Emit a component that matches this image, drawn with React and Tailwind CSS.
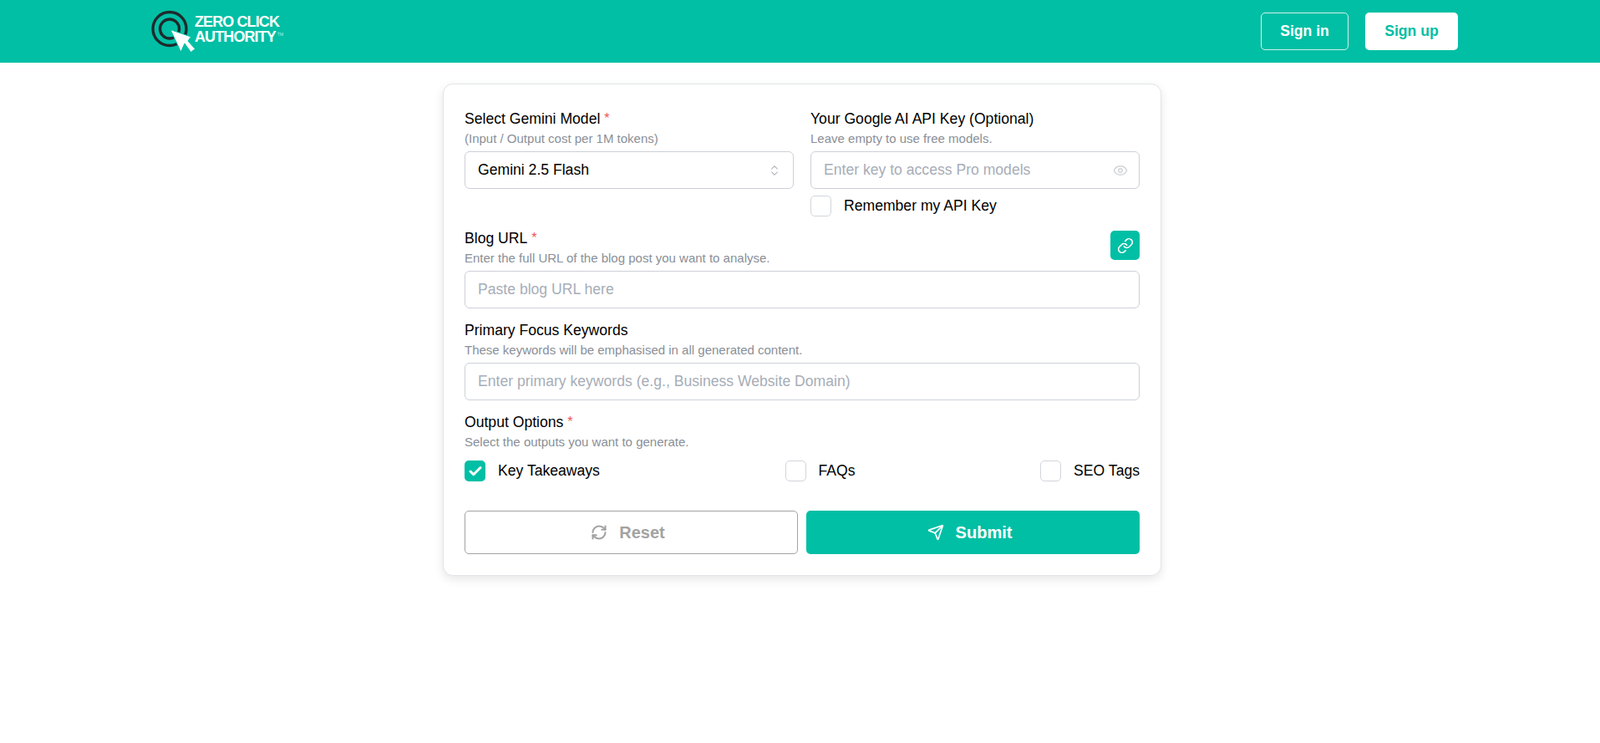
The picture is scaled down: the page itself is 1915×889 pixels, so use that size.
import React from 'react';
import { Check, ChevronsUpDown, Eye, Link, RefreshCw, Send } from 'lucide-react';

const Star = () => <span className="text-[#f05252] ml-[5px] align-[1px] text-[16px]">*</span>;

const Label = ({ children, required }) => (
  <div className="text-[17.6px] leading-[20px] text-black">
    {children}
    {required && <Star />}
  </div>
);

const Hint = ({ children }) => (
  <div className="text-[15px] leading-[16px] mt-[6px] text-[#8a8f98]">{children}</div>
);

const Box = ({ checked }) =>
  checked ? (
    <span className="w-[25px] h-[25px] rounded-[5px] bg-[#00bfa5] flex items-center justify-center shrink-0">
      <Check size={18} strokeWidth={4} className="text-white" />
    </span>
  ) : (
    <span className="w-[25px] h-[25px] rounded-[5px] border border-[#d1d5db] bg-white shrink-0" />
  );

const CheckRow = ({ checked, children }) => (
  <label className="flex items-center gap-[15px] text-[17.6px] leading-[25px] text-black">
    <Box checked={checked} />
    {children}
  </label>
);

const TextField = ({ placeholder }) => (
  <input
    placeholder={placeholder}
    className="w-full h-[45px] rounded-[6px] border border-[#ccd0d8] bg-white px-[15px] text-[17.6px] outline-none placeholder:text-[#a7adb7]"
  />
);

const Logo = () => (
  <div className="flex items-start">
    <svg width="56" height="64" viewBox="0 0 56 64" className="shrink-0">
      <circle cx="22" cy="28.5" r="20" fill="none" stroke="#1f2a2c" strokeWidth="3.4" />
      <circle cx="22" cy="28.5" r="11.5" fill="none" stroke="#1f2a2c" strokeWidth="3.4" />
      <path d="M23 29.5 L35.5 56 L40 46 L47.5 56.5 L52.5 52.5 L44 43 L47.5 38 Z" fill="#fff" stroke="#00bfa5" strokeWidth="1" />
    </svg>
    <div className="ml-[-4px] mt-[11px] text-white font-bold text-[18px] leading-[18px] tracking-[-0.9px]">
      <div>ZERO CLICK</div>
      <div className="flex">
        AUTHORITY
        <span className="text-[5px] leading-[10px] tracking-normal font-normal ml-[2px] mt-[1px] text-[#bfeee6]">TM</span>
      </div>
    </div>
  </div>
);

export default function App() {
  return (
    <div className="min-h-[889px] bg-white font-['Liberation_Sans',Arial,sans-serif]">
      <header className="h-[75px] bg-[#00bfa5] flex items-center justify-between pl-[181px] pr-[170px]">
        <Logo />
        <div className="flex items-center gap-[20px]">
          <button className="w-[105px] h-[45px] rounded-[5px] border border-white/80 text-white font-bold text-[17.6px]">
            Sign in
          </button>
          <button className="w-[111px] h-[45px] rounded-[5px] bg-white text-[#00bfa5] font-bold text-[17.6px]">
            Sign up
          </button>
        </div>
      </header>

      <main className="pt-[25px] pl-[530px]">
        <div className="w-[860px] h-[589px] rounded-[12px] border border-[#e2e4e8] bg-white px-[25px] pt-[31px] shadow-[0_4px_12px_rgba(0,0,0,0.1)]">
          <div className="grid grid-cols-2 gap-x-[20px]">
            <div>
              <Label required>Select Gemini Model</Label>
              <Hint>(Input / Output cost per 1M tokens)</Hint>
              <div className="mt-[7px] h-[45px] rounded-[6px] border border-[#ccd0d8] flex items-center justify-between pl-[15px] pr-[14px] text-[17.6px] text-black">
                Gemini 2.5 Flash
                <ChevronsUpDown size={16} strokeWidth={1.5} className="text-[#8a8f98]" />
              </div>
            </div>
            <div>
              <Label>Your Google AI API Key (Optional)</Label>
              <Hint>Leave empty to use free models.</Hint>
              <div className="mt-[7px] relative">
                <TextField placeholder="Enter key to access Pro models" />
                <Eye size={18} className="absolute right-[14px] top-[14px] text-[#d1d5db]" />
              </div>
              <div className="mt-[8px]">
                <CheckRow>Remember my API Key</CheckRow>
              </div>
            </div>
          </div>

          <div className="mt-[17px] flex items-start justify-between">
            <div className="-mt-[1px]">
              <Label required>Blog URL</Label>
              <Hint>Enter the full URL of the blog post you want to analyse.</Hint>
            </div>
            <button className="w-[35px] h-[35px] rounded-[5px] bg-[#00bfa5] flex items-center justify-center">
              <Link size={20} className="text-white" />
            </button>
          </div>
          <div className="mt-[7px]">
            <TextField placeholder="Paste blog URL here" />
          </div>

          <div className="mt-[16px]">
            <Label>Primary Focus Keywords</Label>
            <Hint>These keywords will be emphasised in all generated content.</Hint>
            <div className="mt-[7px]">
              <TextField placeholder="Enter primary keywords (e.g., Business Website Domain)" />
            </div>
          </div>

          <div className="mt-[16px]">
            <Label required>Output Options</Label>
            <Hint>Select the outputs you want to generate.</Hint>
            <div className="mt-[14px] flex items-center justify-between">
              <CheckRow checked>Key Takeaways</CheckRow>
              <CheckRow>FAQs</CheckRow>
              <CheckRow>SEO Tags</CheckRow>
            </div>
          </div>

          <div className="mt-[35px] grid grid-cols-2 gap-x-[10px]">
            <button className="h-[52px] rounded-[5px] border border-[#a3a3a3] flex items-center justify-center gap-[14px] pr-[8px] text-[20px] font-bold text-[#a3a3a3]">
              <RefreshCw size={20} strokeWidth={2.5} />
              Reset
            </button>
            <button className="h-[52px] rounded-[5px] bg-[#00bfa5] flex items-center justify-center gap-[14px] pr-[8px] text-[20px] font-bold text-white">
              <Send size={20} />
              Submit
            </button>
          </div>
        </div>
      </main>
    </div>
  );
}
